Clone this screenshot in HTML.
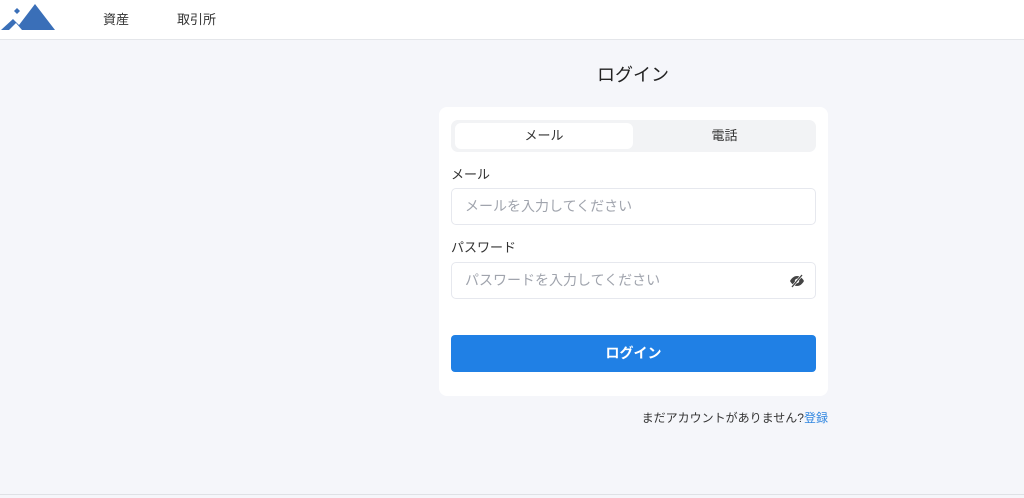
<!DOCTYPE html>
<html><head><meta charset="utf-8"><style>
*{margin:0;padding:0;box-sizing:border-box}
body{width:1024px;height:498px;background:#f5f6fa;font-family:"Liberation Sans","Noto Sans CJK JP",sans-serif;position:relative;overflow:hidden;color:#333}
.hdr{position:absolute;left:0;top:0;width:1024px;height:40px;background:#fff;border-bottom:1px solid #e4e6ea}
.nav{position:absolute;top:9px;font-size:13px;color:#333}
.title{position:absolute;left:0;width:1266px;text-align:center;top:61px;font-size:18px;color:#222}
.card{position:absolute;left:439px;top:107px;width:389px;height:289px;background:#fff;border-radius:8px}
.tabs{position:absolute;left:12px;top:13px;width:365px;height:32px;background:#f2f3f5;border-radius:7px}
.tab{position:absolute;top:3px;height:26px;line-height:26px;text-align:center;font-size:13px;color:#333}
.t1{left:4px;width:178px;background:#fff;border-radius:6px}
.t2{left:182px;width:183px}
.lbl{position:absolute;left:12px;font-size:13px;color:#333}
.inp{position:absolute;left:12px;width:365px;height:37px;border:1px solid #e6e8ee;border-radius:5px;font-size:14px;color:#a0a4ad;padding-left:13px;line-height:35px}
.btn{position:absolute;left:12px;top:228px;width:365px;height:37px;background:#2080e5;border-radius:4px;color:#fff;font-size:14px;font-weight:bold;text-align:center;line-height:37px}
.reg{position:absolute;right:196px;top:409px;font-size:12px;color:#333}
.reg span{color:#2f86e0}
.bl{position:absolute;left:0;top:494px;width:1024px;height:1px;background:#dfe1e5}
</style></head><body>
<div class="hdr">
<svg style="position:absolute;left:0;top:2px" width="56" height="30" viewBox="0 0 56 30">
<polygon points="1,28 13,17 19,23 35,2 55,28" fill="#3a6fb8"/>
<polygon points="9,28 16,21 22,28" fill="#fff"/>
<polygon points="17,6 20,9 17,12 14,9" fill="#3a6fb8"/>
</svg>
<div class="nav" style="left:103px">資産</div>
<div class="nav" style="left:177px">取引所</div>
</div>
<div class="title">ログイン</div>
<div class="card">
<div class="tabs"><div class="tab t1">メール</div><div class="tab t2">電話</div></div>
<div class="lbl" style="top:57px">メール</div>
<div class="inp" style="top:81px">メールを入力してください</div>
<div class="lbl" style="top:130px">パスワード</div>
<div class="inp" style="top:155px">パスワードを入力してください
<svg style="position:absolute;right:10px;top:11px" width="16" height="14" viewBox="0 0 16 14"><path d="M1 7C3 3.5 5.5 2 8 2s5 1.5 7 5c-2 3.5-4.5 5-7 5S3 10.5 1 7z" fill="#444"/><circle cx="8" cy="7" r="2.2" fill="#fff"/><line x1="3" y1="13" x2="13" y2="1" stroke="#fff" stroke-width="2.5"/><line x1="3" y1="13" x2="13" y2="1" stroke="#444" stroke-width="1.3"/></svg></div>
<div class="btn">ログイン</div>
</div>
<div class="reg">まだアカウントがありません?<span>登録</span></div>
<div class="bl"></div>
</body></html>
